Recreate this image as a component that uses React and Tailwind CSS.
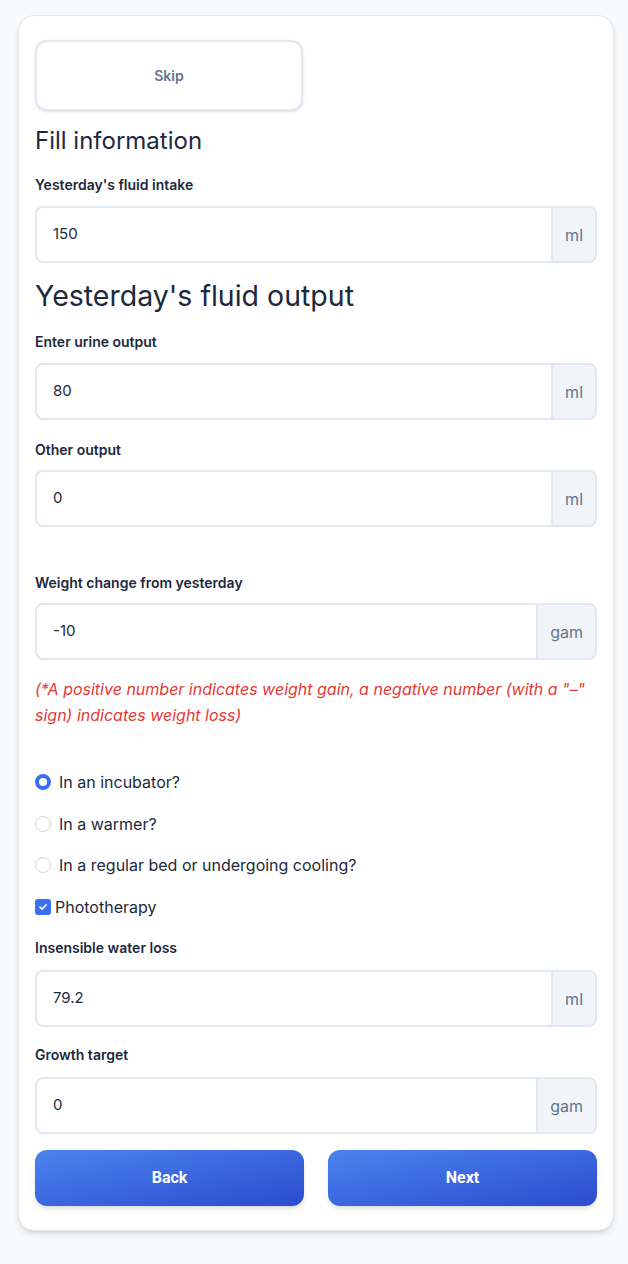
const FONT = { fontFamily: "Inter, 'Noto Sans', sans-serif" };

function Field({ label, value, unit, labelClass, inputClass }) {
  return (
    <>
      <div className={`text-sm leading-5 font-semibold text-slate-800 ${labelClass}`}>{label}</div>
      <div className={`flex h-[57px] rounded-lg border-2 border-slate-200 overflow-hidden ${inputClass}`}>
        <div className="flex-1 flex items-center px-4 text-[15px] text-slate-800">{value}</div>
        <div className="flex items-center px-3 bg-slate-100 border-l-2 border-slate-200 text-base text-slate-500">
          {unit}
        </div>
      </div>
    </>
  );
}

function Radio({ checked, label }) {
  return (
    <div className="flex items-center h-6 gap-2">
      {checked ? (
        <span className="w-4 h-4 rounded-full border-[4px] border-[#3b6ef0] bg-white" />
      ) : (
        <span className="w-4 h-4 rounded-full border border-gray-300 bg-white" />
      )}
      <span className="text-base text-slate-800">{label}</span>
    </div>
  );
}

export default function App() {
  return (
    <div className="min-h-[1264px] bg-[#f8f9fb] pt-[15px] pl-[18px] pr-[14px]" style={FONT}>
      <div className="rounded-2xl border border-slate-200 bg-white shadow-md px-4 pt-6 pb-6">
        <button className="w-[268px] h-[71px] rounded-xl border-2 border-slate-200 bg-white shadow-sm text-sm font-semibold text-slate-500">
          Skip
        </button>
        <h2 className="mt-4 text-2xl leading-[28px] text-slate-800">Fill information</h2>

        <Field label="Yesterday's fluid intake" value="150" unit="ml" labelClass="mt-5" inputClass="mt-[11px]" />

        <h2 className="mt-[17px] text-[28.5px] leading-8 text-slate-800">Yesterday's fluid output</h2>

        <Field label="Enter urine output" value="80" unit="ml" labelClass="mt-5" inputClass="mt-[11px]" />
        <Field label="Other output" value="0" unit="ml" labelClass="mt-5" inputClass="mt-[10px]" />
        <Field label="Weight change from yesterday" value="-10" unit="gam" labelClass="mt-[46px]" inputClass="mt-[10px]" />

        <p className="mt-4 text-base leading-[26px] italic text-[#e53935]">
          (*A positive number indicates weight gain, a negative number (with a "–" sign) indicates weight loss)
        </p>

        <div className="mt-[42px] flex flex-col gap-[17.7px]">
          <Radio checked label="In an incubator?" />
          <Radio label="In a warmer?" />
          <Radio label="In a regular bed or undergoing cooling?" />
          <div className="flex items-center h-6 gap-1">
            <span className="w-4 h-4 rounded-[3px] bg-[#3b6ef0] flex items-center justify-center">
              <svg width="10" height="10" viewBox="0 0 10 10" fill="none">
                <path d="M2 5.2 L4.1 7.2 L8 3" stroke="white" strokeWidth="1.8" strokeLinecap="round" strokeLinejoin="round" />
              </svg>
            </span>
            <span className="text-base text-slate-800">Phototherapy</span>
          </div>
        </div>

        <Field label="Insensible water loss" value="79.2" unit="ml" labelClass="mt-[19px]" inputClass="mt-3" />
        <Field label="Growth target" value="0" unit="gam" labelClass="mt-[18px]" inputClass="mt-3" />

        <div className="mt-4 grid grid-cols-2 gap-6" style={{ fontFamily: "Roboto, Inter, sans-serif" }}>
          <button className="h-14 rounded-xl bg-gradient-to-br from-[#4c83ee] to-[#2c4bcf] text-white text-base font-bold shadow-md">
            Back
          </button>
          <button className="h-14 rounded-xl bg-gradient-to-br from-[#4c83ee] to-[#2c4bcf] text-white text-base font-bold shadow-md">
            Next
          </button>
        </div>
      </div>
    </div>
  );
}
